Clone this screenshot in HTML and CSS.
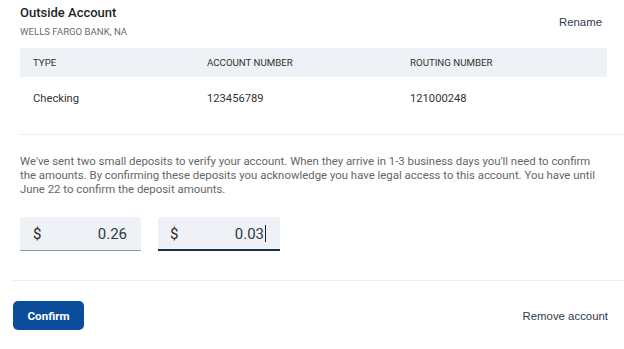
FILE: index.html
```html
<!DOCTYPE html>
<html lang="en">
<head>
    <meta charset="UTF-8">
    <meta name="viewport" content="width=device-width, initial-scale=1.0">
    <title>Outside Account</title>
    <link rel="stylesheet" href="styles.css">
</head>
<body>
    <div class="account-card">
        <!-- 账户标题 -->
        <div class="account-head">
            <div>
                <h1 class="account-title">Outside Account</h1>
                <div class="bank-name">WELLS FARGO BANK, NA</div>
            </div>
            <a href="#" class="text-link rename-link">Rename</a>
        </div>

        <!-- 账户信息表 -->
        <div class="account-table">
            <div class="table-row table-header">
                <span>TYPE</span>
                <span>ACCOUNT NUMBER</span>
                <span>ROUTING NUMBER</span>
            </div>
            <div class="table-row table-body">
                <span>Checking</span>
                <span>123456789</span>
                <span>121000248</span>
            </div>
        </div>

        <!-- 小额验证 -->
        <div class="verify-section">
            <p class="verify-text">We've sent two small deposits to verify your account. When they arrive in 1-3 business days you'll need to confirm the amounts. By confirming these deposits you acknowledge you have legal access to this account. You have until June 22 to confirm the deposit amounts.</p>
            <div class="deposit-inputs">
                <label class="amount-field">
                    <span class="currency">$</span>
                    <input type="text" class="amount-input" value="0.26">
                </label>
                <label class="amount-field active">
                    <span class="currency">$</span>
                    <span class="amount-input">0.03<span class="caret"></span></span>
                </label>
            </div>
        </div>

        <!-- 底部操作 -->
        <div class="card-footer">
            <button type="button" class="confirm-button">Confirm</button>
            <a href="#" class="text-link">Remove account</a>
        </div>
    </div>
</body>
</html>
```

FILE: styles.css
```css
* {
    margin: 0;
    padding: 0;
    box-sizing: border-box;
}

body {
    font-family: 'Roboto', 'Liberation Sans', sans-serif;
    background-color: #fff;
    color: #333;
}

.account-card {
    width: 624px;
}

/* 标题区域 */
.account-head {
    display: flex;
    justify-content: space-between;
    align-items: flex-start;
    padding: 4px 22px 0 20px;
}

.account-title {
    font-size: 13px;
    line-height: 18px;
    font-weight: 500;
    color: #1f1f1f;
}

.bank-name {
    margin-top: 3px;
    font-size: 9.6px;
    line-height: 14px;
    color: #6b6b6b;
}

.text-link {
    font-family: 'Liberation Sans', Arial, sans-serif;
    font-size: 11.4px;
    line-height: 16px;
    color: #2f3b4c;
    text-decoration: none;
}

.rename-link {
    margin-top: 10px;
}

/* 表格 */
.account-table {
    margin: 9px 17px 0 20px;
    padding-bottom: 14px;
}

.table-row {
    display: grid;
    grid-template-columns: 174px 203px 1fr;
    align-items: center;
    padding-left: 13px;
}

.table-header {
    height: 29px;
    background-color: #eef1f5;
    font-size: 9.7px;
    color: #333;
}

.table-body {
    height: 43px;
    font-size: 11.2px;
    color: #333;
}

/* 验证说明 */
.verify-section {
    margin-left: 20px;
    border-top: 1px solid #eeeeee;
    padding: 19px 0 29px;
}

.verify-text {
    width: 584px;
    font-size: 11.4px;
    line-height: 14px;
    color: #666;
}

.deposit-inputs {
    display: flex;
    gap: 17px;
    margin-top: 21px;
}

.amount-field {
    display: flex;
    align-items: center;
    justify-content: space-between;
    width: 121px;
    height: 34px;
    padding: 0 14px 0 13px;
    background-color: #eef1f6;
    border-radius: 3px 3px 0 0;
    border-bottom: 1px solid #8f9bab;
    font-size: 15px;
    color: #2b2b2b;
}

.amount-field.active {
    width: 122px;
    padding: 1px 14px 0 12px;
    border-bottom: 2px solid #1b2e4d;
}

.currency {
    font-size: 15px;
}

.amount-input {
    width: 60px;
    border: none;
    background: transparent;
    font-family: inherit;
    font-size: 15px;
    color: #2f3a48;
    text-align: right;
    outline: none;
}

.caret {
    display: inline-block;
    width: 1px;
    height: 17px;
    margin-left: 1px;
    vertical-align: -3px;
    background-color: #222;
}

/* 底部 */
.card-footer {
    display: flex;
    justify-content: space-between;
    align-items: center;
    margin-left: 13px;
    border-top: 1px solid #eeeeee;
    padding: 20px 16px 19px 0;
}

.confirm-button {
    width: 71px;
    height: 29px;
    border: none;
    border-radius: 5px;
    background-color: #0b4d9b;
    color: #fff;
    font-family: 'Roboto', sans-serif;
    font-size: 11.6px;
    font-weight: 700;
    cursor: pointer;
}
```
